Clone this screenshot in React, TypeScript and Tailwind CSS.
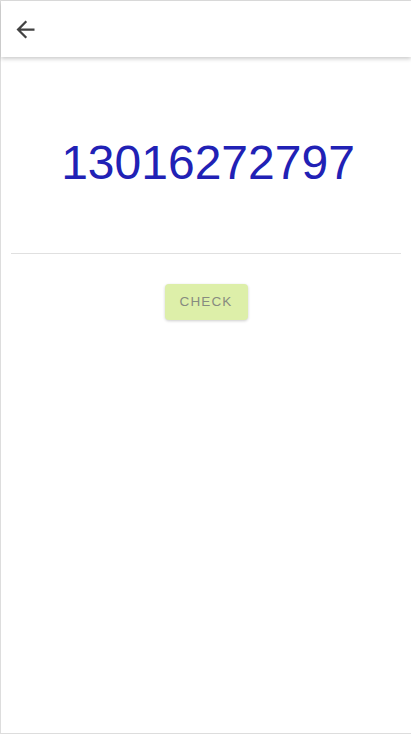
import React from "react";

// Simple check screen: top bar with back arrow, big number, divider and a check button
const App: React.FC = () => {
  return (
    <div className="h-[734px] w-[411px] bg-white font-['Roboto',sans-serif] border-l border-t border-b border-[#dddddd] box-border flex flex-col">
      {/* Top bar */}
      <header className="h-[56px] shrink-0 flex items-center pl-[11px] bg-white shadow-[0_2px_4px_rgba(0,0,0,0.2)] z-10">
        <svg width="27" height="27" viewBox="0 0 24 24" className="text-[#424242]">
          <path
            fill="currentColor"
            d="M20 11H7.83l5.59-5.59L12 4l-8 8 8 8 1.41-1.41L7.83 13H20v-2z"
          />
        </svg>
      </header>

      {/* Number */}
      <div className="flex justify-center pt-[78px] pb-[62px]">
        <span className="font-['Liberation_Sans',Arial,sans-serif] text-[48px] leading-[56px] text-[#2121b5] pl-[4px]">
          13016272797
        </span>
      </div>

      {/* Divider */}
      <div className="mx-[10px] h-px bg-[#e0e0e0]" />

      {/* Button */}
      <div className="flex justify-center pt-[30px]">
        <button className="h-[36px] w-[83px] rounded-[4px] bg-[#ddefa9] text-[#878b80] font-['Liberation_Sans',Arial,sans-serif] text-[13.5px] tracking-[1.1px] uppercase shadow-[0_1px_3px_rgba(0,0,0,0.2)]">
          Check
        </button>
      </div>
    </div>
  );
};

export default App;
